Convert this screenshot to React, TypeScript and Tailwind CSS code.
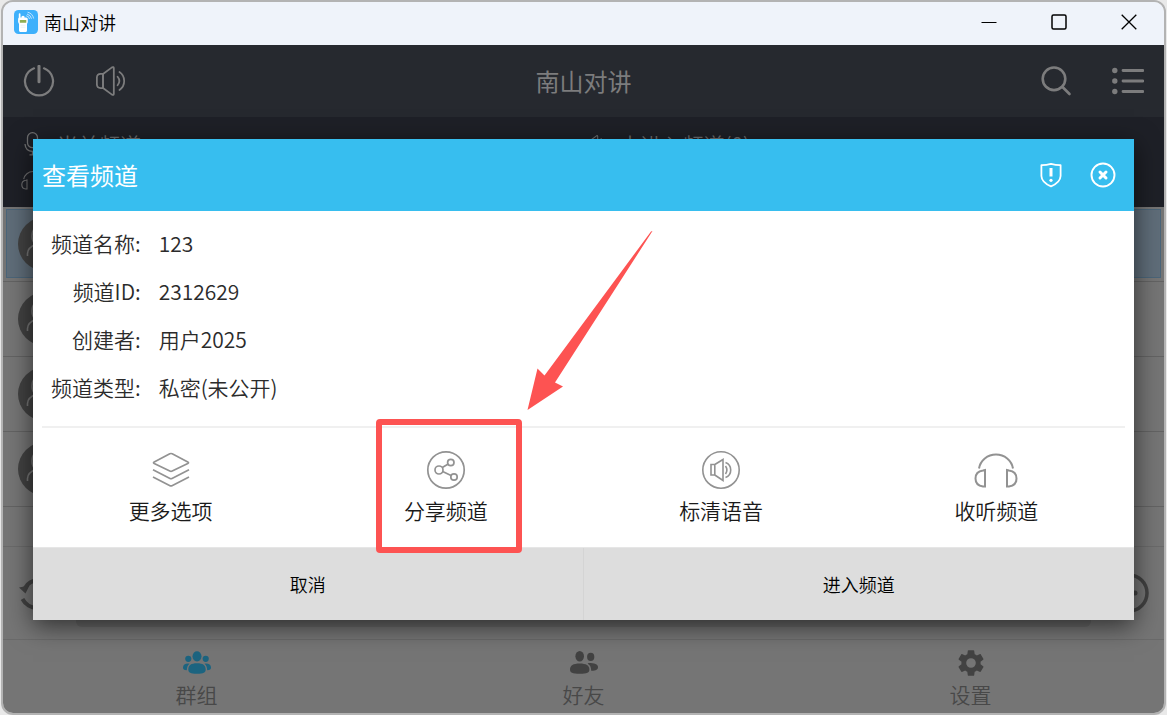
import React from 'react'

type IconProps = { className?: string }

function AppLogo() {
  return (
    <svg viewBox="0 0 24 24" className="w-6 h-6 shrink-0" aria-hidden="true">
      <rect width="24" height="24" rx="4.5" fill="#3eb0fb" />
      <path d="M5.600 3.200q.9 0 .9 1V7.500h1V6.500q1.500-1.400 3 0v1h1.500q1.800 0 1.800 1.800v3l-.8 1.700v6.500q0 1.500-1.500 1.500H6.600Q5.200 22 5 20.500V14l-.9-2V9.200q0-1 .7-1.700v-3.300q0-1 .8-1z" fill="#fff" />
      <rect x="5.800" y="10" width="6.500" height="2.800" rx=".5" fill="#8fae54" />
      <path d="M6.500 15.200h5M6.500 17.200h5" stroke="#e3eef5" strokeWidth=".7" />
      <path d="M12.300 5.800a3.600 3.600 0 0 1 3.200 3.200M13 4a6 6 0 0 1 4.500 4.800M13.600 2.200a8 8 0 0 1 6 6.300" fill="none" stroke="#c9e8ff" strokeWidth=".9" />
    </svg>
  )
}

function PowerIcon({ className }: IconProps) {
  return (
    <svg viewBox="0 0 32 32" className={className} fill="none" stroke="currentColor" strokeWidth="2.200" strokeLinecap="round" aria-hidden="true">
      <path d="M11 3.300a14 14 0 1 0 10 0" />
      <path d="M16 1.200v15.600" strokeWidth="3" />
    </svg>
  )
}

function SpeakerIcon({ className }: IconProps) {
  return (
    <svg viewBox="0 0 34 32" className={className} fill="none" stroke="currentColor" strokeWidth="1.900" strokeLinecap="round" strokeLinejoin="round" aria-hidden="true">
      <path d="M8.500 8.500h-2.500q-4 0-4 4v7q0 4 4 4h2.500z" />
      <path d="M8.500 8.500l9.500-7q2-1 2 1v27q0 2-2 1l-9.500-7z" />
      <path d="M24 11.500q3.800 4.500 0 9M26 6.500a11.500 11.500 0 0 1 0 19" />
    </svg>
  )
}

function SearchIcon({ className }: IconProps) {
  return (
    <svg viewBox="0 0 32 32" className={className} fill="none" stroke="currentColor" strokeWidth="2.600" strokeLinecap="round" aria-hidden="true">
      <circle cx="14" cy="13.800" r="11.300" />
      <path d="M22.500 22l7 7" />
    </svg>
  )
}

function ListIcon({ className }: IconProps) {
  return (
    <svg viewBox="0 0 32 32" className={className} fill="none" stroke="currentColor" strokeWidth="2.800" strokeLinecap="round" aria-hidden="true">
      <path d="M11 5.500h20M11 16h20M11 26.500h20" />
      <g fill="currentColor" stroke="none">
        <circle cx="2.800" cy="5.500" r="2.700" />
        <circle cx="2.800" cy="16" r="2.700" />
        <circle cx="2.800" cy="26.500" r="2.700" />
      </g>
    </svg>
  )
}

function MicIcon({ className }: IconProps) {
  return (
    <svg viewBox="0 0 24 24" className={className} fill="none" stroke="currentColor" strokeWidth="1.300" aria-hidden="true">
      <rect x="6.500" y="0.700" width="10" height="15" rx="5" />
      <path d="M4 12q.5 7.300 7.500 7.300T19 12M11.500 19.300v3.400M8.500 22.800h6" />
    </svg>
  )
}

function HeadsetIcon({ className }: IconProps) {
  return (
    <svg viewBox="0 0 44 36" className={className} fill="none" stroke="currentColor" strokeWidth="2" aria-hidden="true">
      <path d="M5 16.500a17.200 16.500 0 0 1 34 0" />
      <path d="M11 18v16.500h-2q-7.500-1-7.500-8t7.500-8z" />
      <path d="M33 18v16.500h2q7.500-1 7.500-8t-7.500-8z" />
    </svg>
  )
}

function LayersIcon() {
  return (
    <svg viewBox="0 0 40 40" className="w-10 h-10" fill="none" stroke="currentColor" strokeWidth="1.700" strokeLinejoin="round" aria-hidden="true">
      <path d="M18.800 3.800q1.200-.6 2.400 0l15.600 8.200q1.400.8 0 1.600l-15.600 7.400q-1.200.6-2.400 0l-15.600-7.400q-1.400-.8 0-1.600z" />
      <path d="M2 19.800l17 8.700q1 .5 2 0l17-8.700M2 27l17 8.700q1 .5 2 0l17-8.700" />
    </svg>
  )
}

function ShareIcon() {
  return (
    <svg viewBox="0 0 40 40" className="w-10 h-10" fill="none" stroke="currentColor" strokeWidth="1.700" aria-hidden="true">
      <circle cx="20" cy="20" r="18.200" />
      <circle cx="13" cy="20" r="4" />
      <circle cx="24.800" cy="12.500" r="3.200" />
      <circle cx="28" cy="27" r="3.200" />
      <path d="M16.300 17.600l5.900-3.600M16.700 21.600l8.300 4" />
    </svg>
  )
}

function VoiceIcon() {
  return (
    <svg viewBox="0 0 40 40" className="w-10 h-10" fill="none" stroke="currentColor" strokeWidth="1.600" aria-hidden="true">
      <circle cx="20" cy="20" r="18.200" />
      <path d="M10 14.500h3.800v10.500h-3.800zM13.800 14.500l8.200-5v21l-8.200-5.500" />
      <path d="M24.500 16q2.800 4 0 8" />
      <path d="M24.500 12.500a8 8 0 0 1 0 15" />
    </svg>
  )
}

function ShieldAlertIcon() {
  return (
    <svg viewBox="0 0 24 28" className="w-6 h-7" fill="none" stroke="currentColor" strokeWidth="1.800" strokeLinejoin="round" aria-hidden="true">
      <path d="M12 2.800q5 1.500 9.600 1.400v10.800q-.3 6.500-9.600 10.300-9.300-3.800-9.600-10.300v-10.800q4.600.1 9.600-1.400z" />
      <path d="M12 7v8.500" strokeWidth="3" />
      <circle cx="12" cy="19.300" r="1.600" fill="currentColor" stroke="none" />
    </svg>
  )
}

function CircleCloseIcon() {
  return (
    <svg viewBox="0 0 28 28" className="w-7 h-7" fill="none" stroke="currentColor" aria-hidden="true">
      <circle cx="14" cy="14" r="11.500" strokeWidth="1.900" />
      <path d="M11 11l6 6M17 11l-6 6" strokeWidth="3" strokeLinecap="round" />
    </svg>
  )
}

function GroupIcon() {
  return (
    <svg viewBox="0 0 28 28" className="w-7 h-7" fill="currentColor" aria-hidden="true">
      <ellipse cx="14" cy="7.300" rx="4.500" ry="5.100" />
      <circle cx="5.300" cy="9.800" r="3.100" />
      <circle cx="22.700" cy="9.800" r="3.100" />
      <path d="M14 14.200c6 0 8.700 2 8.700 6.300 0 3-2.200 4.200-8.700 4.200s-8.700-1.200-8.700-4.200c0-4.300 2.700-6.300 8.700-6.300z" />
      <path d="M5 14.600c-3 0-5 1.500-5 3.900 0 1.800 1 2.600 3.800 2.700.1-3.100.8-5 2.700-6.500zM23 14.600c3 0 5 1.500 5 3.900 0 1.800-1 2.600-3.800 2.700-.1-3.100-.8-5-2.700-6.500z" />
    </svg>
  )
}

function FriendsIcon() {
  return (
    <svg viewBox="0 0 28 28" className="w-7 h-7" fill="currentColor" aria-hidden="true">
      <ellipse cx="9.700" cy="7.200" rx="4.300" ry="5.200" />
      <ellipse cx="20.700" cy="7.900" rx="3.600" ry="4.100" />
      <path d="M9.700 14.400c6.500 0 9.700 2 9.700 6 0 3-2.200 4.300-9.700 4.300S0 23.400 0 20.400c0-4 3.200-6 9.700-6z" />
      <path d="M18.500 14c6 0 9.500 1.200 9.500 4 0 2.600-2 3.800-6.800 3.700-.1-3.500-.8-5.200-3.500-7z" />
    </svg>
  )
}

function GearIcon() {
  return (
    <svg viewBox="0 0 24 24" className="w-8 h-8 -m-0.5" fill="currentColor" aria-hidden="true">
      <path d="M19.140 12.940c.04-.3.06-.61.06-.94 0-.32-.02-.64-.07-.94l2.030-1.580c.18-.14.23-.41.12-.61l-1.920-3.320c-.12-.22-.37-.29-.59-.22l-2.390.96c-.5-.38-1.030-.7-1.620-.94l-.36-2.540c-.04-.24-.24-.41-.48-.41h-3.840c-.24 0-.43.17-.47.41l-.36 2.540c-.59.24-1.130.57-1.620.94l-2.390-.96c-.22-.08-.47 0-.59.22L2.740 8.870c-.12.21-.08.47.12.61l2.030 1.580c-.05.3-.09.63-.09.94s.02.64.07.94l-2.030 1.580c-.18.14-.23.41-.12.61l1.920 3.320c.12.22.37.29.59.22l2.390-.96c.5.38 1.030.7 1.620.94l.36 2.540c.05.24.24.41.48.41h3.840c.24 0 .44-.17.47-.41l.36-2.540c.59-.24 1.130-.56 1.620-.94l2.390.96c.22.08.47 0 .59-.22l1.920-3.320c.12-.22.07-.47-.12-.61l-2.010-1.580zM12 15.600a3.600 3.600 0 1 1 0-7.200 3.600 3.600 0 0 1 0 7.200z" />
    </svg>
  )
}

function Avatar() {
  return (
    <svg viewBox="0 0 54 54" className="w-[54px] h-[54px]" aria-hidden="true">
      <circle cx="27" cy="27" r="27" fill="#424242" />
      <g fill="none" stroke="#757575" strokeWidth="1.600">
        <circle cx="27" cy="19" r="13" />
        <path d="M9.500 39V36.500Q10 30 18 27.500M44.500 39V36.500Q44 30 36 27.500" />
      </g>
    </svg>
  )
}

function TitleBar() {
  return (
    <div className="h-[43px] pb-[3px] flex items-center justify-between bg-[#eff3fa] text-black">
      <div className="flex items-center gap-1.5 pl-[11px]">
        <AppLogo />
        <span className="text-lg font-[350]">南山对讲</span>
      </div>
      <div className="flex self-stretch">
        <button className="w-[70px] flex items-center justify-center" aria-label="最小化">
          <svg viewBox="0 0 16 16" className="w-4 h-4" stroke="currentColor"><path d="M0.500 8.500h15" /></svg>
        </button>
        <button className="w-[70px] flex items-center justify-center" aria-label="最大化">
          <svg viewBox="0 0 16 16" className="w-4 h-4" stroke="currentColor" fill="none" strokeWidth="1.500"><rect x="1" y="1" width="14" height="14" rx="1.500" /></svg>
        </button>
        <button className="w-[70px] flex items-center justify-center" aria-label="关闭窗口">
          <svg viewBox="0 0 16 16" className="w-4 h-4" stroke="currentColor" strokeWidth="1.300"><path d="M0.700 0.700l14.600 14.600M15.300 0.700L0.700 15.300" /></svg>
        </button>
      </div>
    </div>
  )
}

function Header() {
  return (
    <header className="h-[72px] px-5 flex items-center justify-between bg-[#26292f] text-[#7c7c7d]">
      <div className="flex gap-10">
        <button aria-label="电源"><PowerIcon className="w-8 h-8" /></button>
        <button aria-label="音量"><SpeakerIcon className="w-8 h-8" /></button>
      </div>
      <h1 className="text-2xl">南山对讲</h1>
      <div className="flex gap-10">
        <button aria-label="搜索"><SearchIcon className="w-8 h-8" /></button>
        <button aria-label="菜单"><ListIcon className="w-8 h-8" /></button>
      </div>
    </header>
  )
}

function StatusPanel() {
  return (
    <div className="h-[90px] px-[18px] py-[9px] grid grid-cols-2 grid-rows-2 bg-[#1e2027] text-[#6f6f70] text-[21px] leading-8 font-[350]">
      <div className="flex items-center gap-3">
        <MicIcon className="w-6 h-6" />
        <span>当前频道</span>
      </div>
      <div className="flex items-center gap-3">
        <SpeakerIcon className="w-6 h-[18px]" />
        <span>未进入频道(0)</span>
      </div>
      <div className="flex items-center">
        <HeadsetIcon className="w-6 h-5" />
      </div>
    </div>
  )
}

function ChannelList() {
  return (
    <ul className="flex-1">
      {[0, 1, 2, 3].map((row) => (
        <li key={row} className="h-[75px] px-[3px] pt-0.5 pb-[3px] border-b border-[#636363]">
          <div className={`h-full px-[11px] flex items-center ${row === 0 ? 'bg-[#5f6d79] border border-[#4b6579]' : 'border border-transparent'}`}>
            <Avatar />
          </div>
        </li>
      ))}
    </ul>
  )
}

function TalkBar() {
  return (
    <div className="h-[93px] px-[15px] py-3 flex items-center gap-[18px] border-t border-[#6a6a6a] text-[#424242]">
      <button aria-label="刷新">
        <svg viewBox="0 0 40 40" className="w-10 h-10" fill="none" stroke="currentColor" strokeWidth="4" aria-hidden="true">
          <path d="M7 15a16 16 0 0 1 27-1M4.500 26a16 16 0 0 0 29-1" />
          <path d="M1 14.500l10.500-2L7.500 20.500zM39 25.500l-10.500 2 4-8z" fill="currentColor" stroke="none" />
        </svg>
      </button>
      <button className="flex-1 self-stretch rounded-md bg-[#6a6a6a]" aria-label="按住说话" />
      <button aria-label="更多">
        <svg viewBox="0 0 40 40" className="w-10 h-10" aria-hidden="true">
          <circle cx="20" cy="20" r="18" fill="none" stroke="currentColor" strokeWidth="3.500" />
          <g fill="currentColor">
            <circle cx="12" cy="20" r="2.500" />
            <circle cx="19" cy="20" r="2.500" />
            <circle cx="26" cy="20" r="2.500" />
          </g>
        </svg>
      </button>
    </div>
  )
}

const tabs = [
  { label: '群组', icon: <GroupIcon />, color: 'text-[#1c6480]' },
  { label: '好友', icon: <FriendsIcon />, color: 'text-[#424242]' },
  { label: '设置', icon: <GearIcon />, color: 'text-[#424242]' },
]

function TabBar() {
  return (
    <nav className="h-[74px] grid grid-cols-3 border-t border-[#6a6a6a]">
      {tabs.map((tab) => (
        <button key={tab.label} className="pt-[9px] flex flex-col items-center gap-[3px]">
          <span className={tab.color}>{tab.icon}</span>
          <span className="text-[21px] leading-7 font-[350] text-[#484848]">{tab.label}</span>
        </button>
      ))}
    </nav>
  )
}

/* Red frame and arrow pointing at the share action */
function Highlight() {
  return (
    <div className="absolute z-10 -top-[9px] -bottom-1.5 left-1/2 -ml-[70px] w-[146px] border-[6px] border-[#fd5352] rounded pointer-events-none">
      <svg viewBox="0 0 126 179" className="absolute left-[145px] -top-[194px] w-[126px] h-[179px]" fill="#fd5352" aria-hidden="true">
        <path d="M125.500 0L28 151.500 36 155.500 0.500 179 10.500 137.500 17.500 144.500 124 0.500z" />
      </svg>
    </div>
  )
}

const details = [
  { label: '频道名称:', value: '123' },
  { label: '频道ID:', value: '2312629' },
  { label: '创建者:', value: '用户2025' },
  { label: '频道类型:', value: '私密(未公开)' },
]

const actions = [
  { label: '更多选项', icon: <LayersIcon /> },
  { label: '分享频道', icon: <ShareIcon />, highlighted: true },
  { label: '标清语音', icon: <VoiceIcon /> },
  { label: '收听频道', icon: <HeadsetIcon className="w-11 h-10" /> },
]

function ChannelDialog() {
  return (
    <div role="dialog" aria-label="查看频道" className="w-full bg-white shadow-[0_6px_24px_rgba(0,0,0,0.6)]">
      <div className="h-[72px] pl-[9px] pr-[17px] flex items-center justify-between bg-[#37beef] text-white">
        <h2 className="text-2xl">查看频道</h2>
        <div className="flex items-center gap-[26px]">
          <button aria-label="举报"><ShieldAlertIcon /></button>
          <button aria-label="关闭"><CircleCloseIcon /></button>
        </div>
      </div>

      <dl className="px-[18px] pt-2 pb-[15px] grid grid-cols-[auto_1fr] gap-x-[18px] text-[21px] leading-[48px] font-[350] text-[#2b2b2b]">
        {details.map((item) => (
          <React.Fragment key={item.label}>
            <dt className="text-right">{item.label}</dt>
            <dd>{item.value}</dd>
          </React.Fragment>
        ))}
      </dl>

      <div className="mx-[9px] h-0.5 bg-[#f0f0f0]" />

      <div className="grid grid-cols-4">
        {actions.map((action) => (
          <div key={action.label} className="relative">
            <button className="w-full pt-[22px] pb-[23px] flex flex-col items-center gap-1.5">
              <span className="text-[#929292]">{action.icon}</span>
              <span className="text-[21px] leading-7 font-[350] text-[#1a1a1a]">{action.label}</span>
            </button>
            {action.highlighted && <Highlight />}
          </div>
        ))}
      </div>

      <div className="grid grid-cols-2 border-t border-[#e6e6e6] bg-[#dddddd] text-lg font-[350] text-black">
        <button className="h-[72px] border-r border-[#d4d4d4]">取消</button>
        <button className="h-[72px]">进入频道</button>
      </div>
    </div>
  )
}

export default function App() {
  return (
    <div className="min-h-screen px-px flex flex-col bg-[#e9e9e9] font-['Noto_Sans_CJK_SC',sans-serif]">
      <div className="flex-1 flex flex-col border-2 border-[#b3b3b3] rounded-xl overflow-hidden">
        <TitleBar />
        <div className="relative flex-1 flex flex-col bg-[#757575]">
          <Header />
          <StatusPanel />
          <ChannelList />
          <TalkBar />
          <TabBar />
          <div className="absolute inset-0 px-[30px] pt-px flex items-center justify-center">
            <ChannelDialog />
          </div>
        </div>
      </div>
    </div>
  )
}
